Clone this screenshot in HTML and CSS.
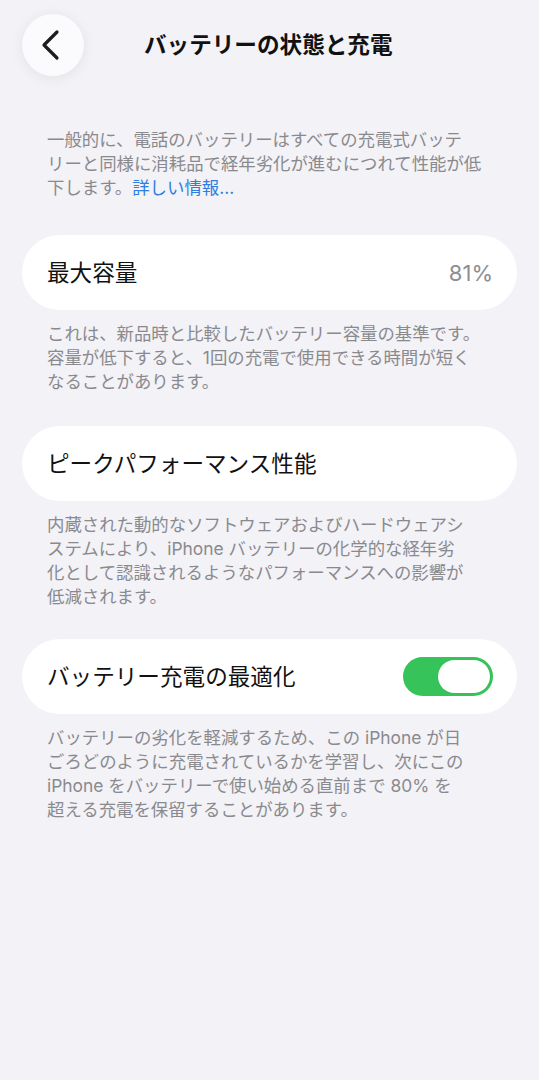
FILE: index.html
```html
<!DOCTYPE html>
<html lang="ja">
<head>
<meta charset="utf-8">
<title>バッテリーの状態と充電</title>
<link rel="stylesheet" href="styles.css">
</head>
<body>
<header class="header">
  <button class="back" aria-label="戻る">
    <svg width="62" height="62" viewBox="0 0 62 62"><path d="M35 18 L22 31 L35 44" fill="none" stroke="#1c1c1e" stroke-width="3.2" stroke-linecap="round" stroke-linejoin="round"/></svg>
  </button>
  <h1 class="title">バッテリーの状態と充電</h1>
</header>
<main class="main">
  <p class="note intro">一般的に、電話のバッテリーはすべての充電式バッテ<br>リーと同様に消耗品で経年劣化が進むにつれて性能が低<br>下します。<a class="link" href="#">詳しい情報...</a></p>

  <div class="card">
    <span class="label">最大容量</span>
    <span class="value">81%</span>
  </div>
  <p class="note">これは、新品時と比較したバッテリー容量の基準です。<br>容量が低下すると、1回の充電で使用できる時間が短く<br>なることがあります。</p>

  <div class="card">
    <span class="label">ピークパフォーマンス性能</span>
  </div>
  <p class="note tight">内蔵された動的なソフトウェアおよびハードウェアシ<br>ステムにより、iPhone バッテリーの化学的な経年劣<br>化として認識されるようなパフォーマンスへの影響が<br>低減されます。</p>

  <div class="card">
    <span class="label">バッテリー充電の最適化</span>
    <span class="toggle" role="switch" aria-checked="true"><span class="knob"></span></span>
  </div>
  <p class="note">バッテリーの劣化を軽減するため、この iPhone が日<br>ごろどのように充電されているかを学習し、次にこの<br>iPhone をバッテリーで使い始める直前まで 80% を<br>超える充電を保留することがあります。</p>
</main>
</body>
</html>
```

FILE: styles.css
```css
html, body {
  margin: 0;
  padding: 0;
}

body {
  background: #f2f2f7;
  font-family: "Inter", "Noto Sans CJK JP", sans-serif;
  color: #1c1c1e;
  width: 539px;
  min-height: 1080px;
}

.header {
  display: flex;
  align-items: center;
  padding: 14px 22px 0;
  gap: 60px;
}

.back {
  width: 62px;
  height: 62px;
  border-radius: 50%;
  border: none;
  padding: 0;
  background: #fbfbfd;
  box-shadow: 0 2px 14px rgba(0, 0, 0, 0.07);
  display: flex;
  align-items: center;
  justify-content: center;
  flex: none;
}

.back svg {
  display: block;
}

.title {
  margin: 0;
  font-size: 22.6px;
  font-weight: 700;
  line-height: 30px;
  color: #111;
}

.main {
  padding: 0 22px;
}

.note {
  margin: 12px 0 32px;
  padding: 0 25px;
  font-size: 17.4px;
  line-height: 24px;
  color: #8a8a8e;
  white-space: nowrap;
}

.note.tight {
  margin-bottom: 30px;
}

.intro {
  margin-top: 52px;
  margin-bottom: 35px;
}

.link {
  color: #2f7de1;
  text-decoration: none;
}

.card {
  height: 75px;
  border-radius: 38px;
  background: #ffffff;
  display: flex;
  align-items: center;
  justify-content: space-between;
  padding: 0 24px 0 25px;
}

.label {
  font-size: 22.6px;
  line-height: 30px;
  color: #111;
}

.value {
  font-size: 22px;
  color: #8e8e93;
}

.toggle {
  width: 90px;
  height: 39px;
  border-radius: 20px;
  background: #36c45a;
  display: flex;
  align-items: center;
  justify-content: flex-end;
  padding: 0 3px;
  box-sizing: border-box;
}

.knob {
  width: 52px;
  height: 33px;
  border-radius: 17px;
  background: #ffffff;
  box-shadow: 0 0 0 1px rgba(60, 180, 90, 0.35);
}
```
